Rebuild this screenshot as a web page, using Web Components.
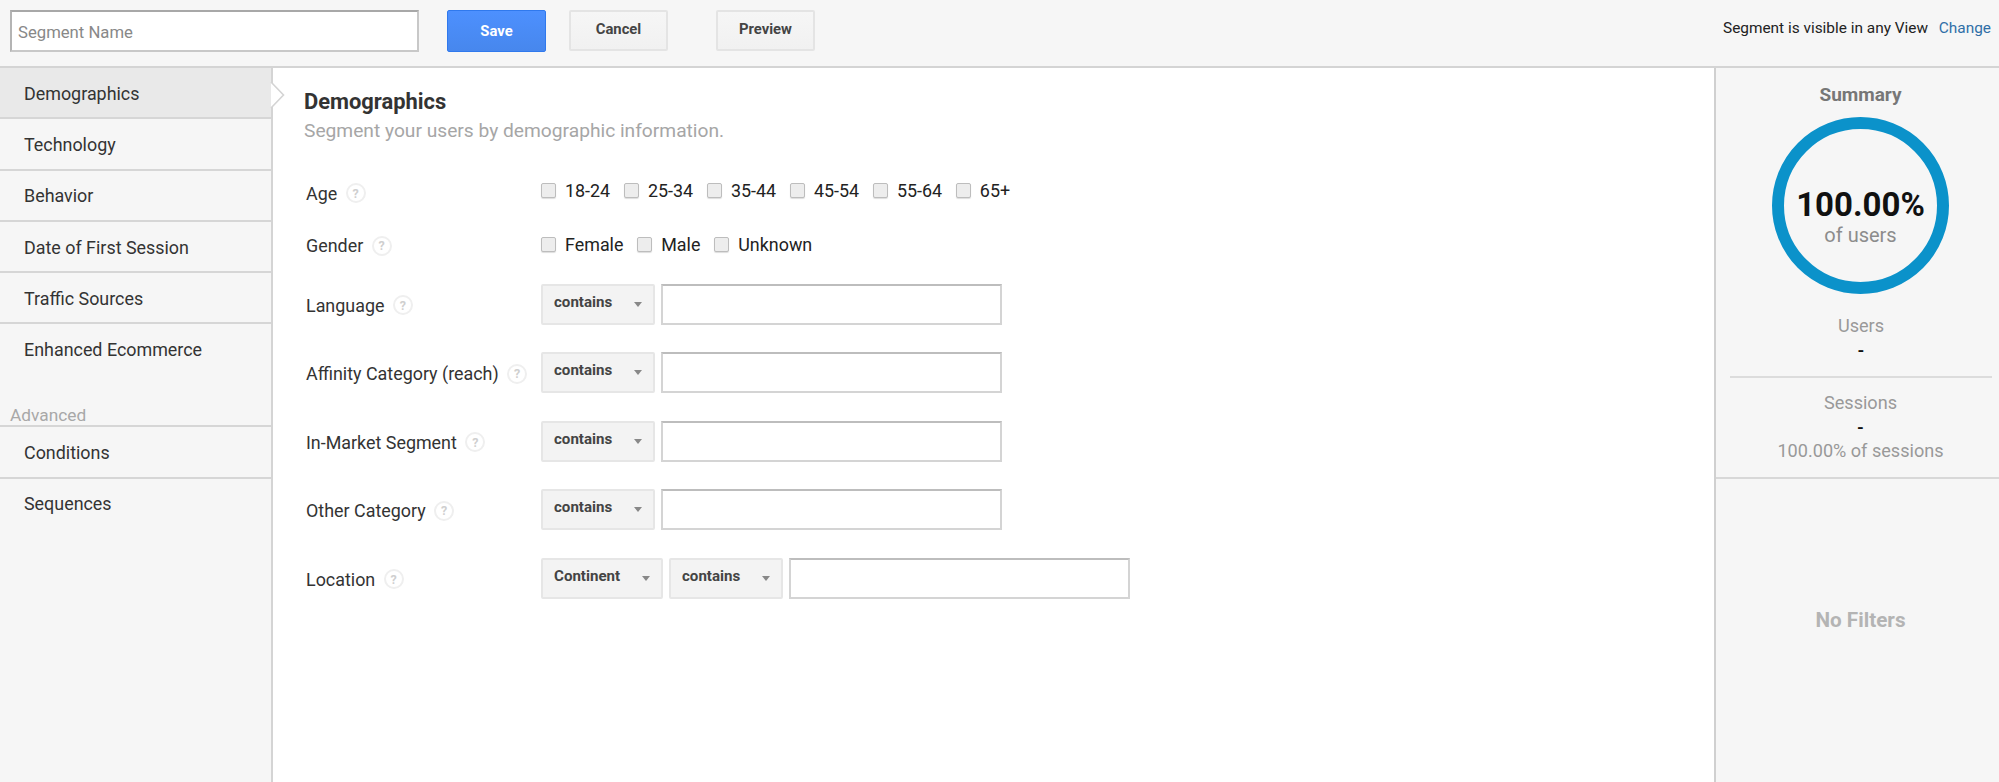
<!DOCTYPE html>
<html><head><meta charset="utf-8">
<style>
html,body{margin:0;padding:0;height:782px;overflow:hidden;background:#fff;font-family:Roboto,"Liberation Sans",sans-serif}
</style></head><body>
<seg-app></seg-app>
<script>
function def(name,css,html){
  customElements.define(name,class extends HTMLElement{
    constructor(){super();const s=this.attachShadow({mode:'open'});s.innerHTML='<style>'+css+'</style>'+(typeof html==='function'?html(this):html);}
  });
}
def('ui-btn',`:host{display:flex;box-sizing:border-box;width:99px;height:41px;align-items:center;justify-content:center;padding-bottom:3px;border:2px solid #e4e4e4;border-radius:2px;background:linear-gradient(#f6f6f6,#f1f1f1);color:#444;font:700 14.8px Roboto,sans-serif}
:host([primary]){background:linear-gradient(#4d90fe,#4787ed);border:1px solid #3079ed;color:#fff;padding-bottom:0;height:42px}`,'<slot></slot>');
def('nav-item',`:host{display:flex;box-sizing:border-box;height:51.3px;align-items:center;padding:1px 0 0 24px;border-bottom:2px solid #d6d6d6;color:#333;font:400 17.9px Roboto,sans-serif}
:host([plain]){border-bottom-color:transparent}
:host([active]){background:#e9e9e9}`,'<slot></slot>');
def('help-dot',`:host{display:inline-flex;box-sizing:border-box;width:20px;height:20px;border:2px solid #efefef;border-radius:50%;align-items:center;justify-content:center;color:#cfcfcf;font:700 12.5px Roboto,sans-serif;margin-left:8.5px;flex:none;background:#fff}`,'?');
def('check-opt',`:host{display:inline-flex;align-items:center;color:#222;font:400 17.9px Roboto,sans-serif;margin-right:13.8px}
i{display:block;box-sizing:border-box;width:15px;height:15px;border:1px solid #bdbdbd;border-radius:2px;background:#ededed;margin-right:9px;box-shadow:0 1px 1px #ddd}`,'<i></i><slot></slot>');
def('drop-sel',`:host{display:flex;box-sizing:border-box;height:41px;justify-content:space-between;padding:0 11px 0 11px;margin-right:6px;border:2px solid #e6e6e6;border-radius:2px;background:#f3f3f3;color:#444;font:700 15.1px/33px Roboto,sans-serif;flex:none}
b{display:block;width:0;height:0;margin-top:16px;border:4.5px solid transparent;border-top:5px solid #888;border-bottom:0}`,'<slot></slot><b></b>');
def('text-box',`:host{display:block;box-sizing:border-box;width:341px;height:41px;background:#fff;border:2px solid #d4d4d4;border-top-color:#bdbdbd;flex:none}`,'');
def('form-row',`:host{display:grid;grid-template-columns:237px auto;align-items:center;height:41px;margin-bottom:27.5px}
.l{display:flex;align-items:center;padding:2px 0 0 2px;color:#333;font:400 17.9px Roboto,sans-serif;white-space:nowrap}
.c{display:flex;align-items:center}
:host([short]){height:20px;grid-template-rows:20px;align-items:start;margin-bottom:32.5px}
:host([short]) .l{padding-top:0;height:20px}
:host([short]) .c{height:20px;margin-top:calc(-1 * var(--lift,3px))}`,
h=>`<div class="l">${h.getAttribute('label')}<help-dot></help-dot></div><div class="c"><slot></slot></div>`);
def('top-bar',`:host{display:flex;box-sizing:border-box;height:68px;padding:10px 8px 0 10px;background:#f6f6f6;border-bottom:2px solid #d4d4d4;align-items:flex-start}
.name{box-sizing:border-box;width:409px;height:42px;background:#fff;border:2px solid #c8c8c8;border-top-color:#a8a8a8;border-left-color:#b4b4b4;color:#888;font:400 16.7px/41px Roboto,sans-serif;padding-left:6px;margin-right:28px}
.gap1{width:23px}.gap2{width:48px}
.vis{margin-left:auto;color:#222;font:400 15.4px/38px Roboto,sans-serif;white-space:nowrap;margin-top:-1px}
a{color:#2f6fa7;margin-left:7px}`,
`<div class="name">Segment Name</div><ui-btn primary>Save</ui-btn><div class="gap1"></div><ui-btn>Cancel</ui-btn><div class="gap2"></div><ui-btn>Preview</ui-btn><div class="vis">Segment is visible in any View <a>Change</a></div>`);
def('side-nav',`:host{display:block;box-sizing:border-box;width:273px;flex:none;background:#f6f6f6;border-right:2px solid #d4d4d4;position:relative}
.adv{box-sizing:border-box;height:51.5px;padding:31px 0 0 10px;color:#a8a8a8;font:400 17.3px/16px Roboto,sans-serif;border-bottom:2px solid #d6d6d6}
svg{position:absolute;left:270px;top:0;z-index:2}`,
`<svg width="16" height="51" viewBox="0 0 16 51"><path d="M1 14 L13.5 27 L1 40 Z" fill="#fff"/><path d="M1 14 L13.5 27 L1 40" fill="none" stroke="#d4d4d4" stroke-width="1.6"/></svg>
<nav-item active>Demographics</nav-item><nav-item>Technology</nav-item><nav-item>Behavior</nav-item><nav-item>Date of First Session</nav-item><nav-item>Traffic Sources</nav-item><nav-item plain>Enhanced Ecommerce</nav-item><div class="adv">Advanced</div><nav-item>Conditions</nav-item><nav-item plain>Sequences</nav-item>`);
def('main-form',`:host{display:block;flex:1;box-sizing:border-box;padding:22px 0 0 31px;background:#fff}
h2{margin:0;font:700 21.9px/24px Roboto,sans-serif;color:#333}
p{margin:5px 0 40px;font:400 19.2px/24px Roboto,sans-serif;color:#a6a6a6}`,
`<h2>Demographics</h2><p>Segment your users by demographic information.</p>
<form-row short label="Age" style="margin-bottom:32.5px"><check-opt>18-24</check-opt><check-opt>25-34</check-opt><check-opt>35-44</check-opt><check-opt>45-54</check-opt><check-opt>55-64</check-opt><check-opt>65+</check-opt></form-row>
<form-row short label="Gender" style="margin-bottom:28px;--lift:1.5px"><check-opt>Female</check-opt><check-opt>Male</check-opt><check-opt>Unknown</check-opt></form-row>
<form-row label="Language"><drop-sel style="width:114px">contains</drop-sel><text-box></text-box></form-row>
<form-row label="Affinity Category (reach)"><drop-sel style="width:114px">contains</drop-sel><text-box></text-box></form-row>
<form-row label="In-Market Segment"><drop-sel style="width:114px">contains</drop-sel><text-box></text-box></form-row>
<form-row label="Other Category"><drop-sel style="width:114px">contains</drop-sel><text-box></text-box></form-row>
<form-row label="Location"><drop-sel style="width:122px">Continent</drop-sel><drop-sel style="width:114px">contains</drop-sel><text-box></text-box></form-row>`);
def('summary-panel',`:host{display:flex;flex-direction:column;box-sizing:border-box;width:285px;flex:none;background:#f6f6f6;border-left:2px solid #d0d0d0;text-align:center;font-family:Roboto,sans-serif;color:#999}
.top{box-sizing:border-box;height:411px;border-bottom:2px solid #d8d8d8;padding:15px 0 0 6px}
h3{margin:0;font:700 19px/24px Roboto,sans-serif;color:#777}
.ring{box-sizing:border-box;width:177px;height:177px;margin:10px auto 0;border:12px solid #0b92ca;border-radius:50%;display:flex;flex-direction:column;align-items:center;padding-top:58px}
.pct{font:700 33px/36px Roboto,sans-serif;color:#111}
.of{font:400 20px/24px Roboto,sans-serif;color:#8c8c8c}
.st{font:400 18.1px/24px Roboto,sans-serif;color:#999}
.d{font:700 17.3px/24px Roboto,sans-serif;color:#111}
.u{margin:20px 7px 0 8px;padding-bottom:14px;border-bottom:2px solid #dcdcdc}
.s{padding-top:13px}
.none{flex:1;display:flex;align-items:center;justify-content:center;padding:0 0 21px 6px;font:700 20.7px Roboto,sans-serif;color:#b4b4b4}`,
`<div class="top"><h3>Summary</h3><div class="ring"><div class="pct">100.00%</div><div class="of">of users</div></div>
<div class="u"><div class="st">Users</div><div class="d">-</div></div>
<div class="s"><div class="st">Sessions</div><div class="d">-</div><div class="st">100.00% of sessions</div></div></div>
<div class="none">No Filters</div>`);
def('seg-app',`:host{display:flex;flex-direction:column;height:782px}
.b{display:flex;flex:1;min-height:0}`,
`<top-bar></top-bar><div class="b"><side-nav></side-nav><main-form></main-form><summary-panel></summary-panel></div>`);
</script>
</body></html>
